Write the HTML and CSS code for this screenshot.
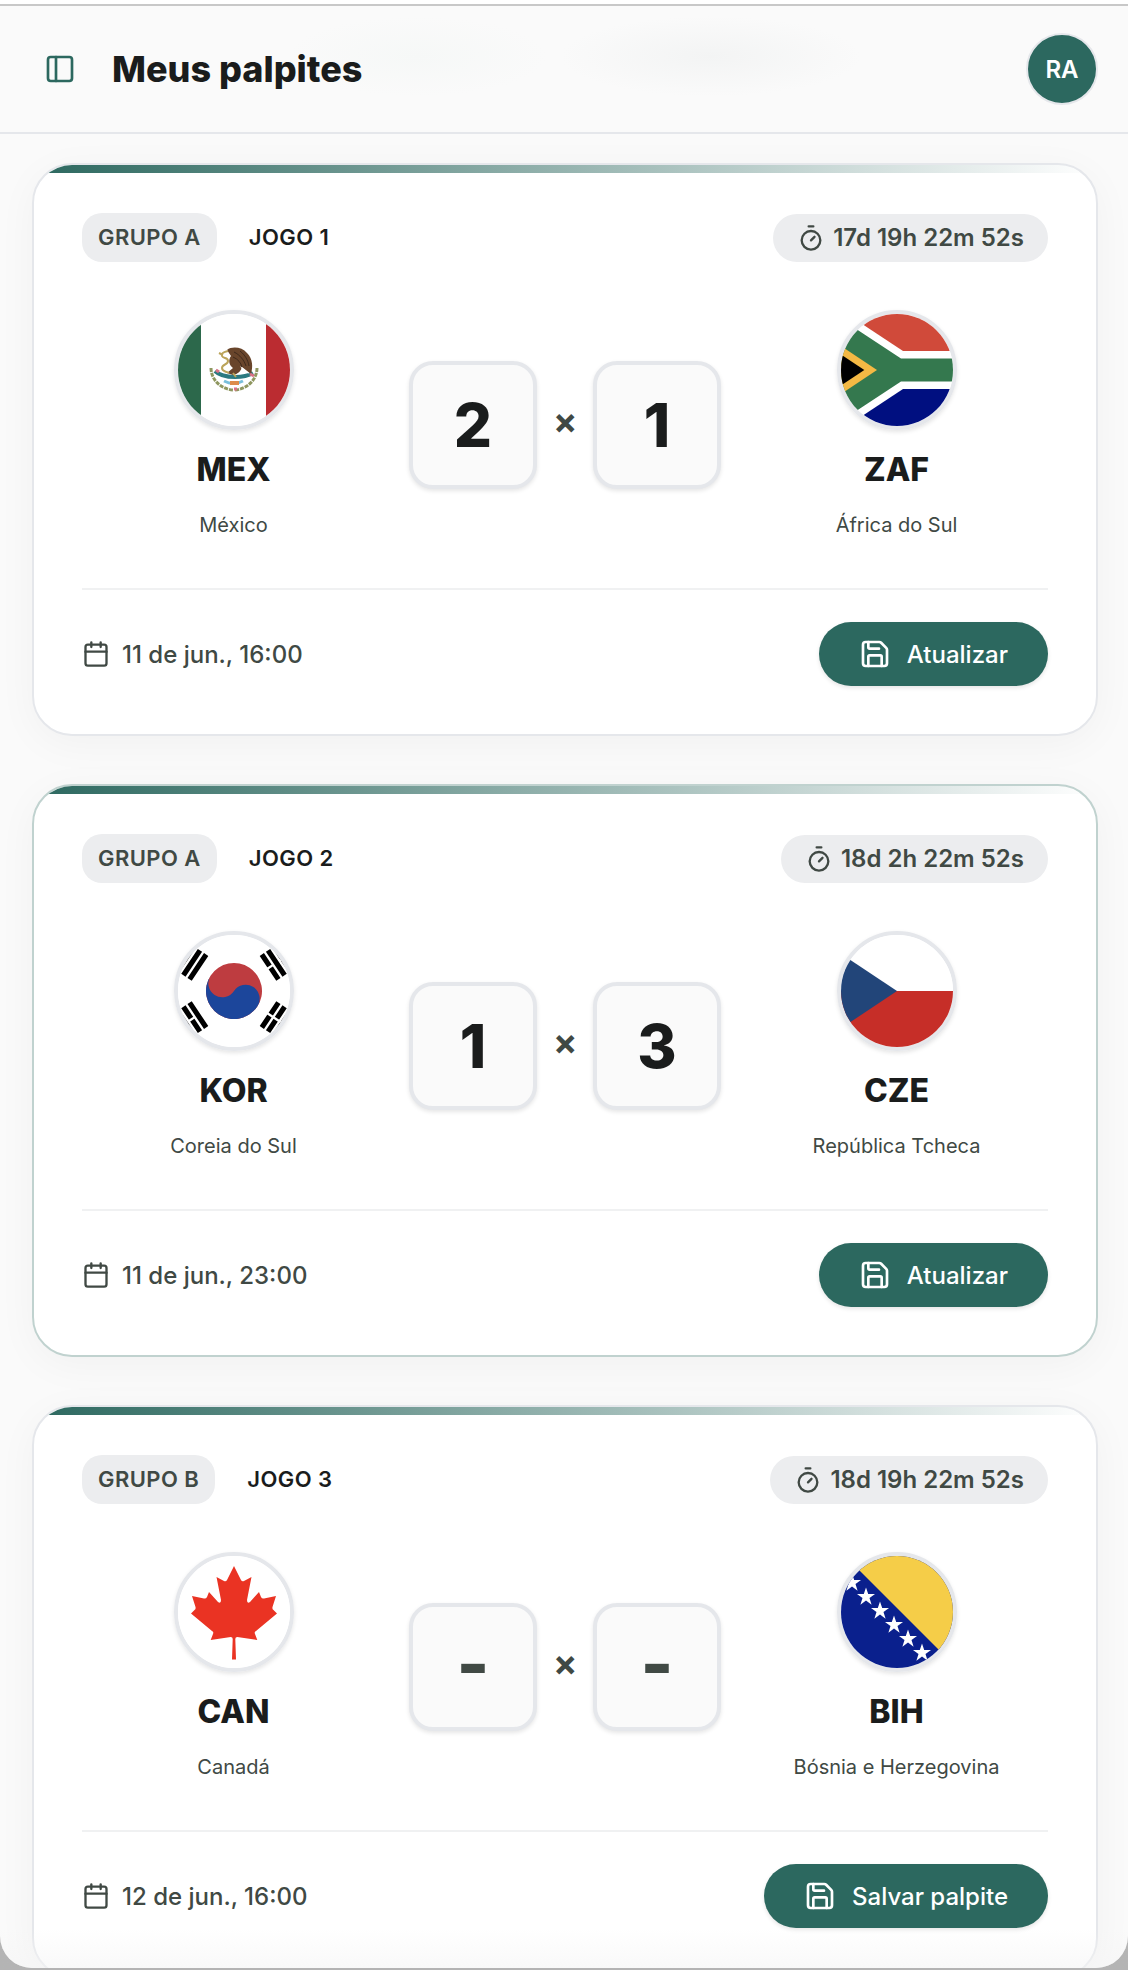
FILE: index.html
```html
<!DOCTYPE html>
<html lang="pt-BR">
<head>
    <meta charset="UTF-8">
    <meta name="viewport" content="width=device-width, initial-scale=1">
    <title>Meus palpites</title>
    <link rel="stylesheet" href="styles.css">
</head>
<body>
    <!-- Shared icons -->
    <svg class="sprite" aria-hidden="true">
        <symbol id="icon-panel" viewBox="0 0 24 24">
            <rect x="3" y="3" width="18" height="18" rx="2"/>
            <path d="M9 3v18"/>
        </symbol>
        <symbol id="icon-timer" viewBox="0 0 24 24">
            <path d="M10 2h4M12 14l3-3"/>
            <circle cx="12" cy="14" r="8"/>
        </symbol>
        <symbol id="icon-calendar" viewBox="0 0 24 24">
            <path d="M8 2v4M16 2v4M3 10h18"/>
            <rect x="3" y="4" width="18" height="18" rx="2"/>
        </symbol>
        <symbol id="icon-save" viewBox="0 0 24 24">
            <path d="M15.2 3a2 2 0 0 1 1.4.6l3.8 3.8a2 2 0 0 1 .6 1.4V19a2 2 0 0 1-2 2H5a2 2 0 0 1-2-2V5a2 2 0 0 1 2-2z"/>
            <path d="M17 21v-7a1 1 0 0 0-1-1H8a1 1 0 0 0-1 1v7M7 3v4a1 1 0 0 0 1 1h7"/>
        </symbol>
        <symbol id="star" viewBox="-10 -10 20 20">
            <path d="M0-9.5L2.2-3H9L3.5 1.1 5.6 7.7 0 3.6-5.6 7.7-3.5 1.1-9-3h6.8z" fill="#fff"/>
        </symbol>
    </svg>

    <div class="window">
        <header class="topbar">
            <button class="menu-button" type="button" aria-label="Abrir menu">
                <svg class="icon icon-lg"><use href="#icon-panel"/></svg>
            </button>
            <h1>Meus palpites</h1>
            <button class="avatar" type="button">RA</button>
        </header>

        <main class="matches">
            <!-- Jogo 1 -->
            <form class="card">
                <div class="card-head">
                    <span class="group">GRUPO A</span>
                    <span class="game">JOGO 1</span>
                    <span class="countdown"><svg class="icon"><use href="#icon-timer"/></svg>17d 19h 22m 52s</span>
                </div>
                <div class="teams">
                    <div class="team">
                        <svg class="flag" viewBox="0 0 112 112">
                            <path fill="#fff" d="M0 0h112v112H0z"/>
                            <path fill="#2c684b" d="M0 0h23v112H0z"/>
                            <path fill="#bb2c31" d="M88 0h24v112H88z"/>
                            <path d="M33 54c0 12 10 21 22 22M79 54c0 12-10 21-22 22" fill="none" stroke="#8f9760" stroke-width="3" stroke-dasharray="4 1"/>
                            <path d="M37 57c5 5 13 6 20 6s13-1 18-4" fill="none" stroke="#2c7a80" stroke-width="4"/>
                            <path d="M46 67c6 3 13 3 19 0" fill="none" stroke="#79bfdb" stroke-width="3"/>
                            <path d="M52 67h9v4h-9z" fill="#dd8c4a"/>
                            <path d="M49 36c5-4 15-3 20 3 6 6 6 14 4 21l-9-7c-1 4-4 7-9 8l-6-2 6-5c-4-3-5-8-2-12z" fill="#69452b"/>
                            <path d="M56 38c6 3 10 8 12 14M55 43c5 2 8 6 9 10M62 37c5 4 8 9 9 15" fill="none" stroke="#3f2a1c" stroke-width="1"/>
                            <path d="M62 52l10 8-7-3z" fill="#fff"/>
                            <path d="M50 37c-4 1-7 2-6 5s6 1 6 5-6 3-6 7 4 3 7 5M41 39l4 2M55 59l3 4" fill="none" stroke="#bba45a" stroke-width="2"/>
                            <path d="M38 56l3 2M72 60l4 2M56 75h3" stroke="#db7186" stroke-width="3"/>
                        </svg>
                        <strong class="code">MEX</strong>
                        <span class="country">México</span>
                    </div>
                    <div class="scores">
                        <input class="score" type="text" inputmode="numeric" value="2" placeholder="-" aria-label="Gols México">
                        <span class="versus">×</span>
                        <input class="score" type="text" inputmode="numeric" value="1" placeholder="-" aria-label="Gols África do Sul">
                    </div>
                    <div class="team">
                        <svg class="flag" viewBox="0 0 112 112">
                            <path fill="#fff" d="M0 0h112v112H0z"/>
                            <path fill="#d04a3a" d="M6 0h106v37H62z"/>
                            <path fill="#000f80" d="M6 112h106V75H62z"/>
                            <path fill="#34784e" d="M0 5l60 39.500h52v23H60L0 107z"/>
                            <path fill="#f4b944" d="M0 32l36 24L0 80z"/>
                            <path d="M0 40.500L23.300 56 0 71.500z"/>
                        </svg>
                        <strong class="code">ZAF</strong>
                        <span class="country">África do Sul</span>
                    </div>
                </div>
                <div class="card-foot">
                    <span class="date"><svg class="icon"><use href="#icon-calendar"/></svg>11 de jun., 16:00</span>
                    <button class="save" type="button"><svg class="icon icon-lg"><use href="#icon-save"/></svg>Atualizar</button>
                </div>
            </form>

            <!-- Jogo 2 -->
            <form class="card card-active">
                <div class="card-head">
                    <span class="group">GRUPO A</span>
                    <span class="game">JOGO 2</span>
                    <span class="countdown"><svg class="icon"><use href="#icon-timer"/></svg>18d 2h 22m 52s</span>
                </div>
                <div class="teams">
                    <div class="team">
                        <svg class="flag" viewBox="-24 -24 48 48">
                            <path fill="#fff" d="M-24-24h48v48h-48z"/>
                            <g transform="rotate(-56.31)">
                                <path d="M-6.400-25H6.400M-6.400-21.800H6.400M-6.400-18.600H6.400M-6.400 18.600H6.400M-6.400 21.800H6.400M-6.400 25H6.400" stroke="#000" stroke-width="2.200"/>
                                <path d="M0 17v10" stroke="#fff"/>
                                <circle r="12" fill="#be3c40"/>
                                <path fill="#1c469b" d="M0-12A6 6 0 0 0 0 0 6 6 0 0 1 0 12 12 12 0 0 1 0-12z"/>
                            </g>
                            <g transform="rotate(-123.69)">
                                <path d="M-6.400-25H6.400M-6.400-21.800H6.400M-6.400-18.600H6.400M-6.400 18.600H6.400M-6.400 21.800H6.400M-6.400 25H6.400" stroke="#000" stroke-width="2.200"/>
                                <path d="M0-23.200v2.800M0 17v3M0 23.500v3" stroke="#fff"/>
                            </g>
                        </svg>
                        <strong class="code">KOR</strong>
                        <span class="country">Coreia do Sul</span>
                    </div>
                    <div class="scores">
                        <input class="score" type="text" inputmode="numeric" value="1" placeholder="-" aria-label="Gols Coreia do Sul">
                        <span class="versus">×</span>
                        <input class="score" type="text" inputmode="numeric" value="3" placeholder="-" aria-label="Gols República Tcheca">
                    </div>
                    <div class="team">
                        <svg class="flag" viewBox="0 0 112 112">
                            <path fill="#fff" d="M0 0h112v56H0z"/>
                            <path fill="#c62e28" d="M0 56h112v56H0z"/>
                            <path fill="#224579" d="M-28 0l84 56-84 56z"/>
                        </svg>
                        <strong class="code">CZE</strong>
                        <span class="country">República Tcheca</span>
                    </div>
                </div>
                <div class="card-foot">
                    <span class="date"><svg class="icon"><use href="#icon-calendar"/></svg>11 de jun., 23:00</span>
                    <button class="save" type="button"><svg class="icon icon-lg"><use href="#icon-save"/></svg>Atualizar</button>
                </div>
            </form>

            <!-- Jogo 3 -->
            <form class="card">
                <div class="card-head">
                    <span class="group">GRUPO B</span>
                    <span class="game">JOGO 3</span>
                    <span class="countdown"><svg class="icon"><use href="#icon-timer"/></svg>18d 19h 22m 52s</span>
                </div>
                <div class="teams">
                    <div class="team">
                        <svg class="flag" viewBox="0 0 112 112">
                            <path fill="#fff" d="M0 0h112v112H0z"/>
                            <path fill="#ea3323" d="M56 10l-7 14q-1 2-3 1l-7.500-4 4.500 23q0 4-3 2l-9-10-2 5q-1 2-3 1.500L14 40l3.500 11q.5 2-1 3L13 57.500 34 75q2 1 1 3l-2.300 6 20-3q2 0 2 2L54 103.500h4L57.300 83q0-2 2-2l20 3L77 78q-1-2 1-3l21-17.500-3.500-3.500q-1.500-1-1-3L98 40l-12 2.500q-2 .5-3-1.500l-2-5-9 10q-3 2-3-2l4.500-23-7.500 4q-2 1-3-1z"/>
                        </svg>
                        <strong class="code">CAN</strong>
                        <span class="country">Canadá</span>
                    </div>
                    <div class="scores">
                        <input class="score" type="text" inputmode="numeric" placeholder="-" aria-label="Gols Canadá">
                        <span class="versus">×</span>
                        <input class="score" type="text" inputmode="numeric" placeholder="-" aria-label="Gols Bósnia e Herzegovina">
                    </div>
                    <div class="team">
                        <svg class="flag" viewBox="0 0 112 112">
                            <path fill="#0a208d" d="M0 0h112v112H0z"/>
                            <path fill="#f5cd48" d="M3-1h112v112z"/>
                            <use href="#star" x="1" y="17" width="20" height="20"/>
                            <use href="#star" x="15" y="31" width="20" height="20"/>
                            <use href="#star" x="29" y="45" width="20" height="20"/>
                            <use href="#star" x="43" y="59" width="20" height="20"/>
                            <use href="#star" x="57" y="73" width="20" height="20"/>
                            <use href="#star" x="71" y="87" width="20" height="20"/>
                        </svg>
                        <strong class="code">BIH</strong>
                        <span class="country">Bósnia e Herzegovina</span>
                    </div>
                </div>
                <div class="card-foot">
                    <span class="date"><svg class="icon"><use href="#icon-calendar"/></svg>12 de jun., 16:00</span>
                    <button class="save" type="button"><svg class="icon icon-lg"><use href="#icon-save"/></svg>Salvar palpite</button>
                </div>
            </form>
        </main>
    </div>
</body>
</html>
```
FILE: styles.css
```css
* {
    box-sizing: border-box;
}
body {
    margin: 0;
    height: 100vh;
    padding: 4px 0 2px;
    overflow: hidden;
    background: linear-gradient(#fff 20px, #c3c3c3 20px, #b4b4b4);
    font-family: Inter, "Liberation Sans", sans-serif;
    color: #1a1c1c;
}
button, input {
    font-family: inherit;
}
.sprite {
    display: none;
}
.window {
    position: relative;
    display: flex;
    flex-direction: column;
    height: 100%;
    overflow: hidden;
    border-top: 2px solid #c8c8c8;
    border-radius: 0 0 32px 32px;
    background-color: #fafafa;
}
/* soft fade over the end of the list */
.window::after {
    content: "";
    position: absolute;
    left: 0;
    right: 0;
    bottom: 0;
    height: 40px;
    background: linear-gradient(rgba(245, 245, 245, 0), rgba(245, 245, 245, 0.6));
    pointer-events: none;
}
.icon {
    flex: none;
    width: 28px;
    height: 28px;
    fill: none;
    stroke: currentColor;
    stroke-width: 2;
    stroke-linecap: round;
    stroke-linejoin: round;
}
.icon-lg {
    width: 32px;
    height: 32px;
}

.topbar {
    flex: none;
    display: flex;
    align-items: center;
    height: 128px;
    padding: 0 30px 0 32px;
    border-bottom: 2px solid #e5e7eb;
    background:
        radial-gradient(ellipse 130px 40px at 37% 40%, #f6f8f7, transparent),
        radial-gradient(ellipse 150px 40px at 63% 40%, #f3f4f4, transparent),
        #fafafa;
}
.topbar h1 {
    flex: 1;
    margin: 0;
    font-size: 36px;
    line-height: 48px;
    font-weight: 800;
}
.menu-button {
    display: flex;
    margin-right: 24px;
    padding: 12px;
    border: none;
    background: none;
    color: #2c685f;
    cursor: pointer;
}
.avatar {
    width: 72px;
    height: 72px;
    padding: 0;
    border: 2px solid #e5e7eb;
    border-radius: 50%;
    background-color: #2c685f;
    color: white;
    font-size: 24px;
    font-weight: 600;
    cursor: pointer;
}

.matches {
    display: flex;
    flex-direction: column;
    gap: 48px;
    padding: 29px 30px 48px 32px;
}
.card {
    position: relative;
    padding: 48px;
    overflow: hidden;
    border: 2px solid #e5e7eb;
    border-radius: 40px;
    background-color: white;
    box-shadow: 0 8px 40px rgba(0, 0, 0, 0.04);
}
.card::before {
    content: "";
    position: absolute;
    top: 0;
    left: 0;
    right: 0;
    height: 8px;
    background: linear-gradient(to right, #2c685f, rgba(44, 104, 95, 0));
}
.card-active {
    border-color: #c0d2cf;
}

.card-head {
    display: flex;
    align-items: center;
    font-size: 22px;
    line-height: 33px;
    font-weight: 600;
}
.group, .game {
    letter-spacing: 0.02em;
}
.group {
    padding: 8px 16px;
    border-radius: 20px;
    background-color: #ecedef;
    color: #404944;
}
.game {
    margin-left: 32px;
}
.countdown {
    display: flex;
    align-items: center;
    gap: 8px;
    margin-left: auto;
    padding: 8px 24px;
    border-radius: 24px;
    background-color: #ecedef;
    color: #404944;
    font-size: 24px;
    line-height: 32px;
}

.teams {
    display: grid;
    grid-template-columns: 1fr auto 1fr;
    align-items: center;
    gap: 24px;
    padding: 48px 0;
}
.team {
    display: flex;
    flex-direction: column;
    align-items: center;
    gap: 20px;
}
.flag {
    width: 120px;
    height: 120px;
    border: 4px solid #e5e7eb;
    border-radius: 50%;
    box-shadow: 0 2px 4px rgba(0, 0, 0, 0.1);
}
.code {
    font-size: 32px;
    line-height: 40px;
    font-weight: 800;
}
.country {
    color: #404944;
    font-size: 20px;
    line-height: 30px;
}
.scores {
    display: flex;
    align-items: center;
    gap: 16px;
}
.score {
    width: 128px;
    height: 128px;
    padding: 0;
    border: 4px solid #e5e7eb;
    border-radius: 24px;
    background-color: #fafafa;
    box-shadow: 0 2px 4px rgba(0, 0, 0, 0.1);
    color: #1a1c1c;
    font-size: 60px;
    font-weight: 800;
    text-align: center;
}
.score::placeholder {
    color: #404944;
    font-size: 70px;
    opacity: 1;
}
.versus {
    width: 24px;
    padding-bottom: 8px;
    color: #404944;
    font-size: 36px;
    line-height: 40px;
    font-weight: 700;
    text-align: center;
}

.card-foot {
    display: flex;
    align-items: center;
    justify-content: space-between;
    padding-top: 32px;
    border-top: 2px solid #f0f1f2;
    font-size: 24px;
    font-weight: 500;
}
.date {
    display: flex;
    align-items: center;
    gap: 12px;
    color: #404944;
}
.save {
    display: flex;
    align-items: center;
    gap: 16px;
    height: 64px;
    padding: 0 40px;
    border: none;
    border-radius: 32px;
    background-color: #2c685f;
    box-shadow: 0 2px 4px rgba(0, 0, 0, 0.1);
    color: white;
    font-size: 24px;
    font-weight: 500;
    cursor: pointer;
}
.save:hover {
    background-color: #245750;
}
```
